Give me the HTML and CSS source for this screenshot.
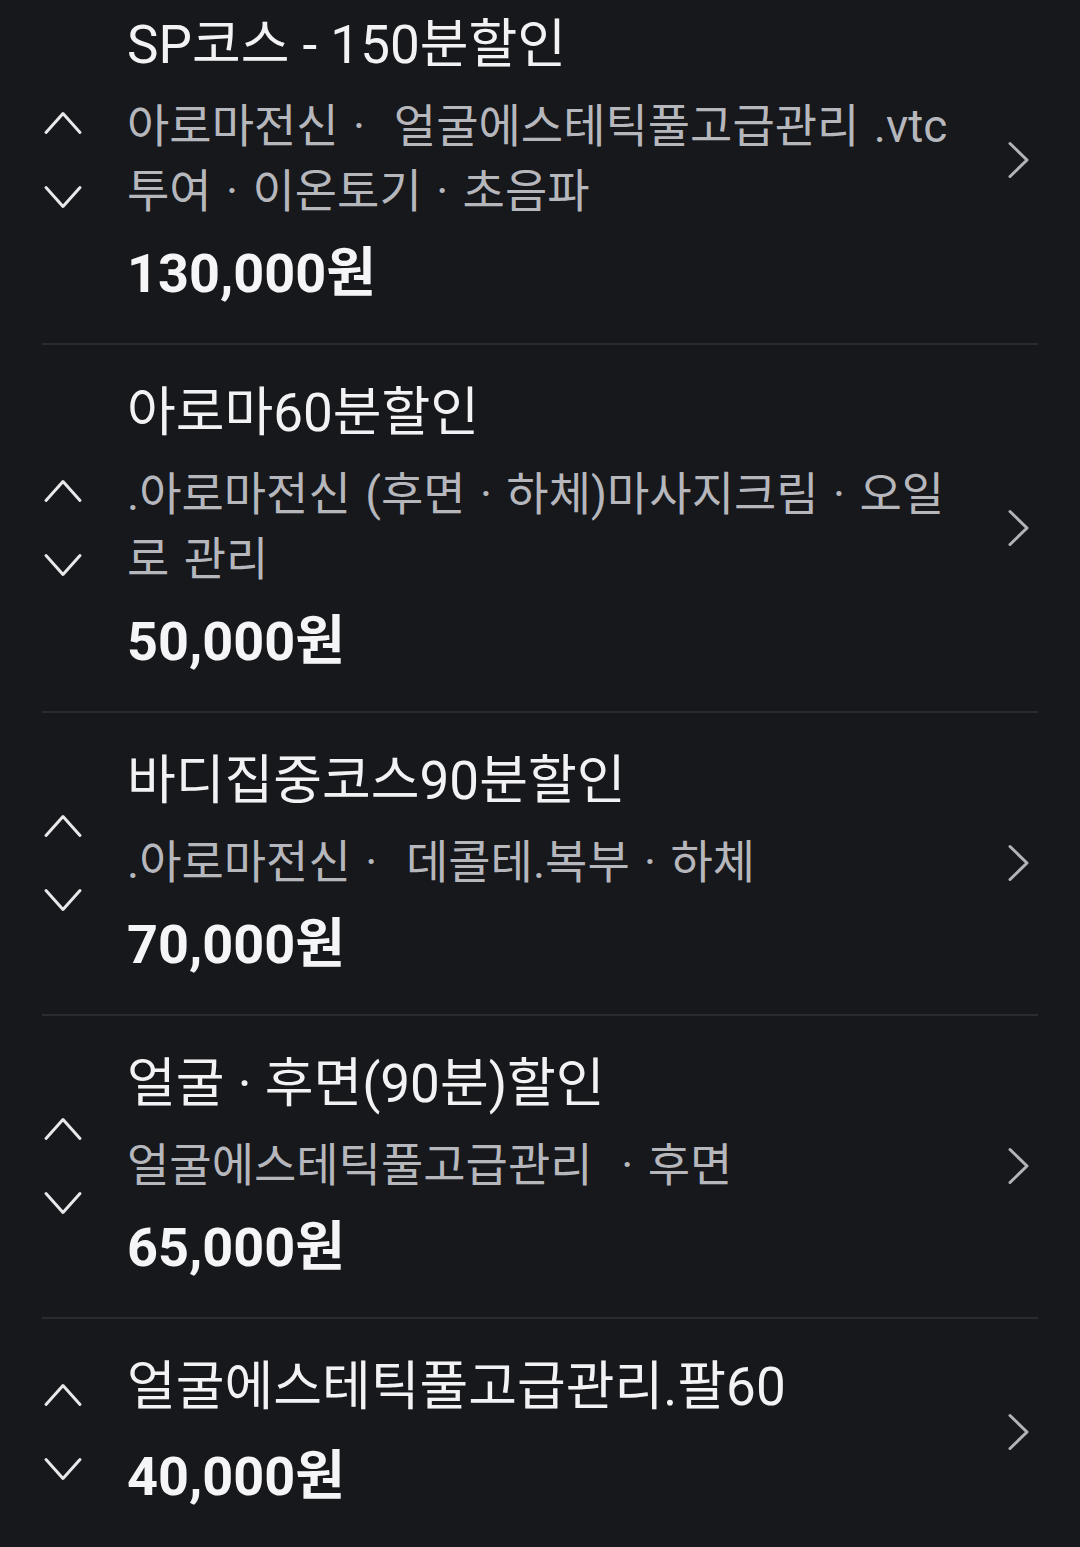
FILE: index.html
```html
<!DOCTYPE html>
<html lang="ko">
<head>
<meta charset="utf-8">
<title>메뉴</title>
<link rel="stylesheet" href="styles.css">
</head>
<body>
<div class="list">
  <div class="item">
    <div class="order">
      <svg class="arrow" viewBox="0 0 40 26" width="40" height="26"><path d="M3 22.5 L20 3.5 L37 22.5"/></svg>
      <svg class="arrow" viewBox="0 0 40 26" width="40" height="26"><path d="M3 3.5 L20 22.5 L37 3.5"/></svg>
    </div>
    <div class="info">
      <div class="title">SP코스 - 150분할인</div>
      <div class="desc">아로마전신 ·  얼굴에스테틱풀고급관리 .vtc<br>투여 · 이온토기 · 초음파</div>
      <div class="price">130,000원</div>
    </div>
    <svg class="go" viewBox="0 0 26 40" width="26" height="40"><path d="M4 3.5 L21 20 L4 36.5"/></svg>
  </div>
  <div class="item">
    <div class="order">
      <svg class="arrow" viewBox="0 0 40 26" width="40" height="26"><path d="M3 22.5 L20 3.5 L37 22.5"/></svg>
      <svg class="arrow" viewBox="0 0 40 26" width="40" height="26"><path d="M3 3.5 L20 22.5 L37 3.5"/></svg>
    </div>
    <div class="info">
      <div class="title">아로마60분할인</div>
      <div class="desc">.아로마전신 (후면 · 하체)마사지크림 · 오일<br>로 관리</div>
      <div class="price">50,000원</div>
    </div>
    <svg class="go" viewBox="0 0 26 40" width="26" height="40"><path d="M4 3.5 L21 20 L4 36.5"/></svg>
  </div>
  <div class="item">
    <div class="order">
      <svg class="arrow" viewBox="0 0 40 26" width="40" height="26"><path d="M3 22.5 L20 3.5 L37 22.5"/></svg>
      <svg class="arrow" viewBox="0 0 40 26" width="40" height="26"><path d="M3 3.5 L20 22.5 L37 3.5"/></svg>
    </div>
    <div class="info">
      <div class="title">바디집중코스90분할인</div>
      <div class="desc">.아로마전신 ·  데콜테.복부 · 하체</div>
      <div class="price">70,000원</div>
    </div>
    <svg class="go" viewBox="0 0 26 40" width="26" height="40"><path d="M4 3.5 L21 20 L4 36.5"/></svg>
  </div>
  <div class="item">
    <div class="order">
      <svg class="arrow" viewBox="0 0 40 26" width="40" height="26"><path d="M3 22.5 L20 3.5 L37 22.5"/></svg>
      <svg class="arrow" viewBox="0 0 40 26" width="40" height="26"><path d="M3 3.5 L20 22.5 L37 3.5"/></svg>
    </div>
    <div class="info">
      <div class="title">얼굴 · 후면(90분)할인</div>
      <div class="desc">얼굴에스테틱풀고급관리  · 후면</div>
      <div class="price">65,000원</div>
    </div>
    <svg class="go" viewBox="0 0 26 40" width="26" height="40"><path d="M4 3.5 L21 20 L4 36.5"/></svg>
  </div>
  <div class="item last">
    <div class="order">
      <svg class="arrow" viewBox="0 0 40 26" width="40" height="26"><path d="M3 22.5 L20 3.5 L37 22.5"/></svg>
      <svg class="arrow" viewBox="0 0 40 26" width="40" height="26"><path d="M3 3.5 L20 22.5 L37 3.5"/></svg>
    </div>
    <div class="info">
      <div class="title nodesc">얼굴에스테틱풀고급관리.팔60</div>
      <div class="price">40,000원</div>
    </div>
    <svg class="go" viewBox="0 0 26 40" width="26" height="40"><path d="M4 3.5 L21 20 L4 36.5"/></svg>
  </div>
</div>
</body>
</html>
```

FILE: styles.css
```css
html, body {
  margin: 0;
  padding: 0;
  background: #17181c;
}
body {
  font-family: Roboto, "Noto Sans CJK KR", sans-serif;
  color: #f1f1f3;
  overflow: hidden;
  height: 1547px;
}
.list {
  margin-top: -23px;
  padding: 0 42px;
}
.item {
  display: flex;
  align-items: center;
  padding: 36px 6px 37px 0;
  border-bottom: 2px solid #2a2b30;
}
.item.last {
  border-bottom: none;
}
.order {
  width: 85px;
  flex: none;
  display: flex;
  flex-direction: column;
  gap: 48px;
  padding-left: 1px;
  box-sizing: border-box;
}
.arrow path,
.go path {
  fill: none;
  stroke-width: 3;
  stroke-linecap: round;
  stroke-linejoin: round;
}
.arrow path {
  stroke: #e8e8ea;
}
.go {
  flex: none;
}
.go path {
  stroke: #b3b4b8;
}
.info {
  flex: 1;
  min-width: 0;
}
.title {
  font-size: 53px;
  line-height: 64px;
  color: #f2f2f4;
  margin-bottom: 17px;
  white-space: pre;
}
.title.nodesc {
  margin-bottom: 26px;
}
.desc {
  font-size: 46px;
  line-height: 65px;
  color: #b6b7bc;
  margin-bottom: 18px;
  white-space: pre;
  word-spacing: 3px;
}
.price {
  font-size: 54px;
  line-height: 64px;
  font-weight: 700;
  color: #f5f5f7;
}
```
